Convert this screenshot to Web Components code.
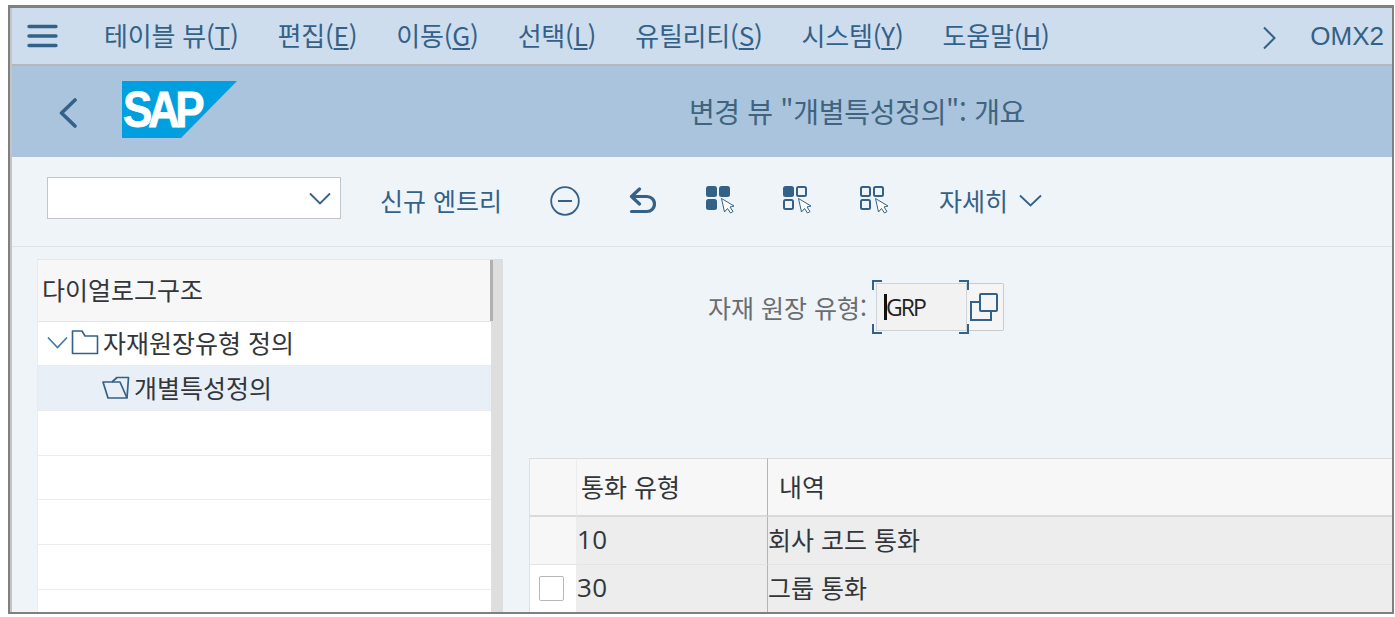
<!DOCTYPE html>
<html lang="ko">
<head>
<meta charset="utf-8">
<title>변경 뷰</title>
<style>
  html, body { margin: 0; height: 100%; background: #fff; overflow: hidden; }
  body { font-family: "Noto Sans CJK KR", "Noto Sans", sans-serif; padding: 5px 1px 3px 8px; box-sizing: border-box; }
</style>
</head>
<body>
<sap-window>
  <sap-menubar></sap-menubar>
  <sap-titlebar>변경 뷰 "개별특성정의": 개요</sap-titlebar>
  <sap-toolbar></sap-toolbar>
  <sap-main>
    <sap-tree slot="left"></sap-tree>
    <sap-field slot="right" label="자재 원장 유형:" value="GRP"></sap-field>
    <sap-table slot="right"></sap-table>
  </sap-main>
</sap-window>

<script>
const BLUE = "#346187";

// pointer drawn over the selection icons, it takes the place of the fourth cell
const POINTER = `<path d="M15.500 12.500L18.500 26l3-3.500 3 4.500 2.500-1.500-3-4.500 4-1z" fill="#fff" stroke="${BLUE}" stroke-width="1" stroke-linejoin="round"/>`;

function gridIcon(filled) {
  const cell = (x, y, on) => on
    ? `<rect x="${x}" y="${y}" width="11" height="11" rx="2.500" fill="${BLUE}"/>`
    : `<rect x="${x + 1}" y="${y + 1}" width="9" height="9" rx="1.500" fill="none" stroke="${BLUE}" stroke-width="2"/>`;
  return `<svg width="32" height="30" viewBox="0 0 32 30">
    ${cell(0, 0, filled > 0)}${cell(13, 0, filled > 2)}${cell(0, 13, filled > 2)}
    ${POINTER}
  </svg>`;
}

class SapWindow extends HTMLElement {
  constructor() {
    super();
    this.attachShadow({ mode: "open" }).innerHTML = `
      <style>
        :host {
          display: flex;
          flex-direction: column;
          position: relative;
          height: 100%;
          box-sizing: border-box;
          border: solid #808080;
          border-width: 3px 2px 2px 2px;
          overflow: hidden;
          background: #eff4f9;
        }
        .edge { position: absolute; left: 0; top: 0; bottom: 0; width: 2px; background: #c2c4c6; }
      </style>
      <slot></slot>
      <div class="edge"></div>`;
  }
}

class SapMenubar extends HTMLElement {
  constructor() {
    super();
    const items = [["테이블 뷰", "T"], ["편집", "E"], ["이동", "G"], ["선택", "L"], ["유틸리티", "S"], ["시스템", "Y"], ["도움말", "H"]];
    this.attachShadow({ mode: "open" }).innerHTML = `
      <style>
        :host {
          display: flex;
          align-items: center;
          height: 58px;
          flex: none;
          box-sizing: border-box;
          padding: 0 8px 4px 17px;
          background: #cddded;
          border-bottom: 2px solid #b4b8bc;
          color: ${BLUE};
          font-size: 26px;
          letter-spacing: -.2px;
          white-space: nowrap;
        }
        .burger { flex: none; margin: 4px 45px 0 0; display: block; }
        nav { display: flex; gap: 39px; flex: 1; }
        .more { flex: none; margin: 8px 34px 0 0; display: block; }
        .sys { font-family: "Liberation Sans", sans-serif; letter-spacing: 0; margin-top: 4px; }
      </style>
      <svg class="burger" width="32" height="26" viewBox="0 0 32 26" fill="none" stroke="${BLUE}" stroke-width="3.400" stroke-linecap="round">
        <path d="M2 3.500h27M2 13h27M2 22.500h27"/>
      </svg>
      <nav>${items.map(([t, k]) => `<span>${t}(<u>${k}</u>)</span>`).join("")}</nav>
      <svg class="more" width="14" height="24" viewBox="0 0 14 24" fill="none" stroke="${BLUE}" stroke-width="2"><path d="M2 1.500L12.500 12 2 22.500"/></svg>
      <span class="sys">OMX2</span>`;
  }
}

class SapTitlebar extends HTMLElement {
  constructor() {
    super();
    this.attachShadow({ mode: "open" }).innerHTML = `
      <style>
        :host {
          display: flex;
          align-items: center;
          height: 91px;
          flex: none;
          padding-left: 49px;
          background: #a9c4dc;
          color: #40647f;
          font-size: 28px;
          letter-spacing: -.3px;
        }
        .back { flex: none; margin-right: 45px; display: block; margin-top: 2px; }
        .logo { flex: none; display: block; margin-top: -5px; }
        .logo text { font: bold 50px "Liberation Sans", sans-serif; letter-spacing: -5px; fill: #fff; stroke: #fff; stroke-width: .8px; }
        h1 { flex: 1; margin: -2px 0 0; font: inherit; text-align: center; padding-left: 85px; }
      </style>
      <svg class="back" width="18" height="30" viewBox="0 0 18 30" fill="none" stroke="${BLUE}" stroke-width="3.600" stroke-linecap="round" stroke-linejoin="round"><path d="M16 2L2.500 15 16 28"/></svg>
      <svg class="logo" width="115" height="57" viewBox="0 0 115 57">
        <polygon points="0,0 115,0 59,57 0,57" fill="#009fe0"/>
        <text transform="translate(1 45.500) scale(.88 1)">SAP</text>
      </svg>
      <h1><slot></slot></h1>`;
  }
}

class SapToolbar extends HTMLElement {
  constructor() {
    super();
    this.attachShadow({ mode: "open" }).innerHTML = `
      <style>
        :host {
          display: flex;
          align-items: center;
          height: 90px;
          flex: none;
          box-sizing: border-box;
          padding: 0 0 2px 37px;
          border-bottom: 1px solid #dde3e8;
          color: ${BLUE};
          font-size: 25px;
          letter-spacing: 0;
          white-space: nowrap;
        }
        .select {
          width: 294px; height: 42px; box-sizing: border-box;
          background: #fff; border: 1px solid #c2c6ca;
          display: flex; align-items: center; justify-content: flex-end; padding-right: 9px;
          margin: -5px 39px 0 0;
        }
        svg { display: block; flex: none; }
        .new { margin: -2px 48px 0 0; }
        .minus { margin-right: 49px; }
        .undo { margin-right: 50px; }
        .g { margin-right: 45px; }
        .g.last { margin-right: 0; }
        .more { margin: -2px 0 0 47px; }
        .more-ch { margin-left: 11px; }
      </style>
      <div class="select">
        <svg width="22" height="13" viewBox="0 0 22 13" fill="none" stroke="${BLUE}" stroke-width="1.800"><path d="M1 1.500l10 10 10-10"/></svg>
      </div>
      <span class="new">신규 엔트리</span>
      <svg class="minus" width="30" height="30" viewBox="0 0 30 30" fill="none" stroke="${BLUE}" stroke-width="1.800"><circle cx="15" cy="15" r="13.800"/><path d="M8 15h14" stroke-width="2"/></svg>
      <svg class="undo" width="27" height="27" viewBox="0 0 27 27" fill="none" stroke="${BLUE}" stroke-width="3.200" stroke-linecap="round" stroke-linejoin="round"><path d="M10.500 2L2.500 9.500 10.500 17"/><path d="M3.500 9.500H18a6.500 6.500 0 0 1 0 15H2.500"/></svg>
      <span class="g">${gridIcon(3)}</span>
      <span class="g">${gridIcon(1)}</span>
      <span class="g last">${gridIcon(0)}</span>
      <span class="more">자세히</span>
      <svg class="more-ch" width="23" height="13" viewBox="0 0 23 13" fill="none" stroke="${BLUE}" stroke-width="1.800"><path d="M1 1.500l10.500 10 10.500-10"/></svg>`;
  }
}

class SapMain extends HTMLElement {
  constructor() {
    super();
    this.attachShadow({ mode: "open" }).innerHTML = `
      <style>
        :host { display: flex; flex: 1; min-height: 0; overflow: hidden; padding-top: 12px; }
        .left { flex: none; width: 454px; margin-left: 27px; }
        .split { flex: none; width: 12px; background: #dedede; }
        .right { flex: 1; min-width: 0; display: flex; flex-direction: column; padding-left: 26px; }
      </style>
      <div class="left"><slot name="left"></slot></div>
      <div class="split"></div>
      <div class="right"><slot name="right"></slot></div>`;
  }
}

class SapTree extends HTMLElement {
  constructor() {
    super();
    this.attachShadow({ mode: "open" }).innerHTML = `
      <style>
        :host {
          display: block; height: 100%; background: #fff; color: #32363a;
          font-size: 25px; letter-spacing: 0; position: relative;
          box-sizing: border-box; border-left: 1px solid #e8eaec;
        }
        .head {
          height: 62.500px; box-sizing: border-box; background: #f7f7f7;
          display: flex; align-items: center; padding: 0 0 3px 4px;
          border-top: 1px solid #e6e6e6; border-bottom: 1px solid #e6e6e6;
          position: relative;
        }
        .head::after { content: ""; position: absolute; right: -2px; top: 0; bottom: 0; width: 3px; background: #b0b0b0; }
        .row {
          height: 44.700px; box-sizing: border-box; border-bottom: 1px solid #ececec;
          display: flex; align-items: center; padding-bottom: 2px;
        }
        .row.sel { background: #e8eff7; }
        svg { display: block; flex: none; }
      </style>
      <div class="head">다이얼로그구조</div>
      <div class="row">
        <svg style="margin-left:9px" width="21" height="13" viewBox="0 0 21 13" fill="none" stroke="#3d79ab" stroke-width="1.600"><path d="M1 1.500l9.500 10 9.500-10"/></svg>
        <svg style="margin-left:3px;margin-right:4px" width="28" height="26" viewBox="0 0 28 26" fill="none" stroke="${BLUE}" stroke-width="1.600" stroke-linejoin="round"><path d="M1.500 24.500V2h9.500l3 5h12.500v17.500z"/></svg>
        <span>자재원장유형 정의</span>
      </div>
      <div class="row sel">
        <svg style="margin-left:64px;margin-right:4px" width="28" height="23" viewBox="0 0 28 23" fill="none" stroke="${BLUE}" stroke-width="1.700" stroke-linejoin="round"><path d="M1 6H18l7 16H6z"/><path d="M10 6l5-4.500H26.500L25 22"/></svg>
        <span>개별특성정의</span>
      </div>
      <div class="row"></div><div class="row"></div><div class="row"></div><div class="row"></div><div class="row"></div>`;
  }
}

class SapField extends HTMLElement {
  constructor() {
    super();
    const label = this.getAttribute("label");
    const value = this.getAttribute("value");
    this.attachShadow({ mode: "open" }).innerHTML = `
      <style>
        :host {
          display: flex; align-items: center; flex: none;
          height: 48px; margin-top: 24px; padding-left: 179px;
          font-size: 25px; letter-spacing: 0; color: #6a6d70;
        }
        label { margin-right: 9px; white-space: nowrap; }
        .box {
          position: relative; display: flex; align-items: center;
          width: 91px; height: 48px; box-sizing: border-box;
          background: #f2f2f2; border: 1px solid #d0d3d6;
          padding-left: 9px; color: #222;
          font: 23px "Open Sans", sans-serif; letter-spacing: -2px;
        }
        .caret { position: absolute; left: 7px; top: 10px; width: 3px; height: 26px; background: #111; }
        .corners { position: absolute; left: -5px; top: -4px; width: 97px; height: 54px; display: block; }
        .btn {
          width: 37px; height: 48px; box-sizing: border-box;
          background: #f5f5f5; border: 1px solid #c8cbce; border-left: 0; border-radius: 0 2px 2px 0;
          display: flex; align-items: center; justify-content: center; padding-right: 2px;
        }
        svg { display: block; }
      </style>
      <label>${label}</label>
      <div class="box">
        <span>${value}</span><i class="caret"></i>
        <svg class="corners" viewBox="0 0 97 54" fill="none" stroke="${BLUE}" stroke-width="2">
          <path d="M10 1H1v9M87 1h9v9M1 44v9h9M96 44v9h-9"/>
        </svg>
      </div>
      <div class="btn">
        <svg width="28" height="28" viewBox="0 0 28 28" fill="none" stroke="${BLUE}" stroke-width="2">
          <path d="M10 9H1v18h20v-9"/>
          <rect x="10" y="1" width="17" height="17" rx="1" fill="#f5f5f5"/>
        </svg>
      </div>`;
  }
}

class SapTable extends HTMLElement {
  constructor() {
    super();
    this.attachShadow({ mode: "open" }).innerHTML = `
      <style>
        :host {
          display: block; flex: none; margin-top: 127px;
          font-size: 25px; letter-spacing: 0; color: #32363a;
        }
        .tr { display: grid; grid-template-columns: 47px 191px 1fr; }
        .tr > div { display: flex; align-items: center; box-sizing: border-box; white-space: nowrap; }
        .head > div { height: 59px; padding-bottom: 2px; background: #f7f7f7; border-top: 1px solid #dcdcdc; border-bottom: 2px solid #dadada; }
        .body > div { height: 48px; padding-bottom: 4px; background: #ededed; border-bottom: 1px solid #e4e4e4; }
        .tr > div:first-child { border-left: 1px solid #e0e0e0; }
        .tr > div:nth-child(2) { border-left: 1px solid #ececec; }
        .tr > div:nth-child(3) { border-left: 1px solid #b4b4b4; }
        .head > div:nth-child(2) { padding-left: 4px; }
        .head > div:nth-child(3) { padding-left: 11px; }
        .body > div:nth-child(2) { font: 26px "Open Sans", sans-serif; letter-spacing: .4px; }
        .body > .mark { background: #f7f7f7; padding: 0; }
        .body > .mark.on { background: #fff; padding-left: 9px; }
        .check { width: 25px; height: 25px; box-sizing: border-box; background: #fff; border: 1px solid #b6b9bc; border-radius: 2px; }
      </style>
      <div class="tr head"><div></div><div>통화 유형</div><div>내역</div></div>
      <div class="tr body"><div class="mark"></div><div>10</div><div>회사 코드 통화</div></div>
      <div class="tr body"><div class="mark on"><span class="check"></span></div><div>30</div><div>그룹 통화</div></div>`;
  }
}

customElements.define("sap-window", SapWindow);
customElements.define("sap-menubar", SapMenubar);
customElements.define("sap-titlebar", SapTitlebar);
customElements.define("sap-toolbar", SapToolbar);
customElements.define("sap-main", SapMain);
customElements.define("sap-tree", SapTree);
customElements.define("sap-field", SapField);
customElements.define("sap-table", SapTable);
</script>
</body>
</html>
